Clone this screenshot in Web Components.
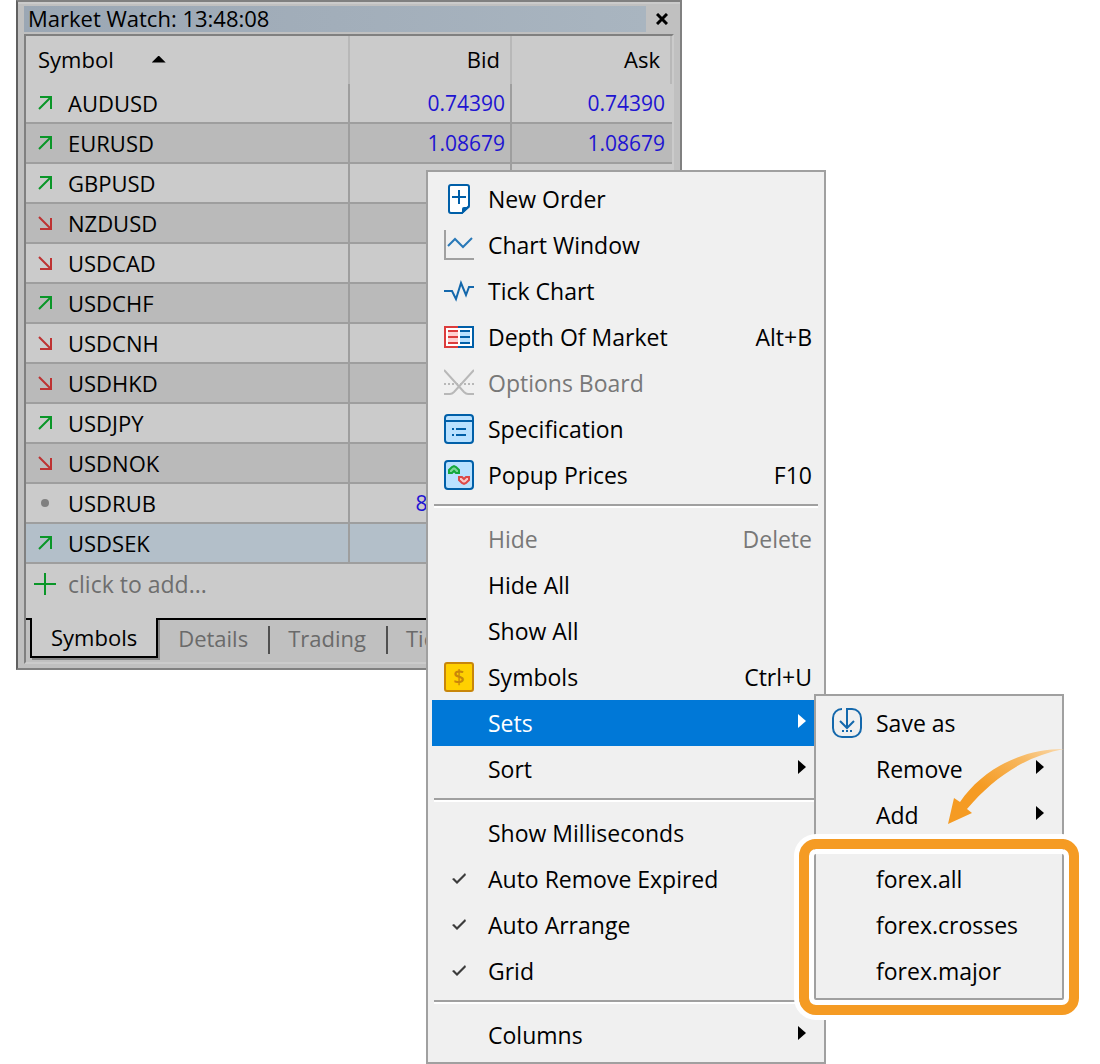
<!DOCTYPE html>
<html lang="en">
<head>
<meta charset="utf-8">
<meta name="viewport" content="width=device-width, initial-scale=1">
<title>Market Watch</title>
<style>
  body{
    margin: 0;
    background: #fff;
    color: #000;
    font-family: "Open Sans", "Noto Sans", sans-serif;
    font-size: 23px;
    line-height: 30px;
  }
</style>
</head>
<body>
<trade-desktop></trade-desktop>

<script>
// 30x30 icons, plus the small glyphs of the symbol list
const ICONS = {
  order: `<path d="M7 1h16a2 2 0 0 1 2 2v19l-7 7H7a2 2 0 0 1-2-2V3a2 2 0 0 1 2-2z" fill="#fff" stroke="#005fa8" stroke-width="2"/>
    <path d="M18 30v-5a2 2 0 0 1 2-2h6z" fill="#005fa8"/><path d="M15 6v14M8 13h14" stroke="#005fa8" stroke-width="2"/>`,
  chart: `<path d="M1 0v29h29" stroke="#a0a0a0" stroke-width="2"/><path d="M4 16l7-7 8 8 9-9" stroke="#2878b8" stroke-width="2"/>`,
  tick: `<path d="M0 15h8l4 8 5-16 5 12 3-8h5" stroke="#1468ac" stroke-width="2"/>`,
  depth: `<path d="M1 5h14v20H1z" fill="#fff" stroke="#dc3c3c" stroke-width="2"/><path d="M15 5h14v20H15z" fill="#fff" stroke="#005fa8" stroke-width="2"/>
    <path d="M4 8h10v14H4z" fill="#ffd2d2"/><path d="M16 8h10v14H16z" fill="#b9e1ff"/><path d="M14 6h2v18h-2z" fill="#fff"/>
    <path d="M4 9h10M4 15h10M4 21h10" stroke="#dc3c3c" stroke-width="2"/><path d="M16 9h10M16 15h10M16 21h10" stroke="#005fa8" stroke-width="2"/>`,
  options: `<path d="M0 2l20 22q2 2 4 2h6M30 2L10 24q-2 2-4 2H0" stroke="#b8b8b8" stroke-width="2"/>
    <path d="M0 16h30" stroke="#b8b8b8" stroke-width="2" stroke-dasharray="2 2"/>`,
  spec: `<rect x="1" y="1" width="28" height="28" rx="3" fill="#b9e1ff" stroke="#005fa8" stroke-width="2"/>
    <path d="M1 7h28M8 15h2M8 21h2M12 15h10M12 21h10" stroke="#005fa8" stroke-width="2"/>`,
  popup: `<rect x="1" y="1" width="28" height="28" rx="3" fill="#b9e1ff" stroke="#005fa8" stroke-width="2"/>
    <path d="M5 13v-3l3-3 2-1 2 1 3 3v3h-3l-2-2-2 2z" fill="#7ed69a" stroke="#14a83c" stroke-width="2"/>
    <path d="M15 17h3l2 2 2-2h3v3l-3 3-2 1-2-1-3-3z" fill="#f8c8c8" stroke="#dc4848" stroke-width="2"/>`,
  symbols: `<rect x="1" y="1" width="28" height="28" rx="2" fill="#ffd000" stroke="#c8860a" stroke-width="2"/>
    <text x="15" y="22" text-anchor="middle" font-size="20" font-weight="600" fill="#c8860a">$</text>`,
  save: `<path d="M10 1a9 9 0 0 0-9 9v10a9 9 0 0 0 9 9h10a9 9 0 0 0 9-9V10a9 9 0 0 0-9-9h-5v18M8 13l7 7 7-7" stroke="#1468ac" stroke-width="2"/>
    <path d="M10 23h2M14 23h2M18 23h2" stroke="#1468ac" stroke-width="2"/>`,
  up: `<path d="M9 21L21 9M10 9h11v12" stroke="#0a9628" stroke-width="2"/>`,
  down: `<path d="M9 9l12 12M21 10v11H10" stroke="#be3232" stroke-width="2"/>`,
  dot: `<circle cx="15" cy="15" r="4" fill="#808080"/>`,
  plus: `<path d="M15 4v22M4 15h22" stroke="#0a9628" stroke-width="2"/>`,
};

class UiIcon extends HTMLElement{
  constructor(){
    super();
    this.attachShadow({mode: 'open'});
  }

  connectedCallback(){
    this.shadowRoot.innerHTML = `
      <style>
        :host{ display: block; flex: none; width: 30px; height: 30px; }
        svg{ display: block; }
      </style>
      <svg width="30" height="30" viewBox="0 0 30 30" fill="none" aria-hidden="true">${ICONS[this.getAttribute('name')] || ''}</svg>`;
  }
}
customElements.define('ui-icon', UiIcon);

// One line of a menu: icon or tick, label, shortcut or submenu arrow
class MenuItem extends HTMLElement{
  constructor(){
    super();
    this.attachShadow({mode: 'open'});
  }

  connectedCallback(){
    const icon = this.getAttribute('icon');
    const shortcut = this.getAttribute('shortcut');
    const check = this.hasAttribute('checked');
    const tag = check ? 'label' : 'button';
    const lead = check ? '<input type="checkbox" checked>' : `<ui-icon name="${icon || ''}"></ui-icon>`;

    this.shadowRoot.innerHTML = `
      <style>
        :host{ display: block; position: relative; }
        .row{
          display: flex;
          align-items: center;
          gap: 14px;
          box-sizing: border-box;
          width: 100%;
          height: 46px;
          margin: 0;
          padding: 0 8px 0 12px;
          border: 0;
          background: none;
          color: inherit;
          font: inherit;
          text-align: left;
          white-space: nowrap;
        }
        .row:disabled{ color: #787878; }
        :host([active]) .row{ background: #0078d7; color: #fff; }
        .text{ flex: 1; }
        .arrow{
          width: 8px;
          height: 14px;
          margin: 0 6px 4px 0;
          background: currentColor;
          clip-path: polygon(0 0, 100% 50%, 0 100%);
        }
        input{
          appearance: none;
          width: 30px;
          height: 30px;
          margin: 0;
        }
        input:checked{
          background: #3c3c3c;
          clip-path: polygon(8px 15px, 10px 14px, 13px 17px, 21px 9px, 22px 11px, 13px 20px);
        }
      </style>
      <${tag} class="row" ${this.hasAttribute('disabled') ? 'disabled' : ''}>
        ${lead}
        <span class="text"><slot></slot></span>
        ${shortcut ? `<span>${shortcut}</span>` : ''}
        ${this.hasAttribute('submenu') ? '<span class="arrow"></span>' : ''}
      </${tag}>
      <slot name="submenu"></slot>`;
  }
}
customElements.define('menu-item', MenuItem);

class MenuSeparator extends HTMLElement{
  constructor(){
    super();
    this.attachShadow({mode: 'open'}).innerHTML = `
      <style>
        :host{ display: block; padding: 6px 2px 8px; }
        div{ height: 2px; background: #a0a0a0; border-bottom: 2px solid #fff; }
      </style>
      <div role="separator"></div>`;
  }
}
customElements.define('menu-separator', MenuSeparator);

class ContextMenu extends HTMLElement{
  constructor(){
    super();
    this.attachShadow({mode: 'open'}).innerHTML = `
      <style>
        :host{
          display: block;
          box-sizing: border-box;
          padding: 4px;
          border: 2px solid #a0a0a0;
          background: #f0f0f0;
          color: #000;
        }
      </style>
      <slot></slot>`;
  }
}
customElements.define('context-menu', ContextMenu);

// Orange outline drawn around whatever is slotted in
class HighlightFrame extends HTMLElement{
  constructor(){
    super();
    this.attachShadow({mode: 'open'}).innerHTML = `
      <style>
        :host{ display: block; position: relative; }
        .frame{
          position: absolute;
          inset: -17px -21px -21px;
          border: 10px solid #f59b23;
          border-radius: 17px;
          box-shadow: 0 0 0 5px #fff, inset 0 0 0 5px #fff;
          pointer-events: none;
        }
      </style>
      <slot></slot>
      <div class="frame"></div>`;
  }
}
customElements.define('highlight-frame', HighlightFrame);

class PointerArrow extends HTMLElement{
  constructor(){
    super();
    this.attachShadow({mode: 'open'}).innerHTML = `
      <style>
        :host{ display: block; pointer-events: none; }
        svg{ display: block; }
      </style>
      <svg width="118" height="78" viewBox="0 0 118 78" aria-hidden="true">
        <defs>
          <linearGradient id="fade" x1="0" y1="1" x2="1" y2="0">
            <stop offset="0.4" stop-color="#f59b23"/>
            <stop offset="0.75" stop-color="#f7b860"/>
            <stop offset="1" stop-color="#fad9ac"/>
          </linearGradient>
        </defs>
        <path d="M2 76L8 50l6 4C36 22 74 1 118 1C80 8 48 29 21 61l5 4z" fill="url(#fade)"/>
      </svg>`;
  }
}
customElements.define('pointer-arrow', PointerArrow);

const QUOTES = [
  {name: 'AUDUSD', dir: 'up', bid: '0.74390', ask: '0.74390'},
  {name: 'EURUSD', dir: 'up', bid: '1.08679', ask: '1.08679'},
  {name: 'GBPUSD', dir: 'up'},
  {name: 'NZDUSD', dir: 'down'},
  {name: 'USDCAD', dir: 'down'},
  {name: 'USDCHF', dir: 'up'},
  {name: 'USDCNH', dir: 'down'},
  {name: 'USDHKD', dir: 'down'},
  {name: 'USDJPY', dir: 'up'},
  {name: 'USDNOK', dir: 'down'},
  {name: 'USDRUB', dir: 'dot', bid: '82.33050'},
  {name: 'USDSEK', dir: 'up', selected: true},
];

class MarketWatch extends HTMLElement{
  constructor(){
    super();
    this.attachShadow({mode: 'open'});
    this.render();
  }

  render(){
    const rows = QUOTES.map(q => `
      <tr class="${q.selected ? 'selected' : ''}">
        <td><div class="symbol"><ui-icon name="${q.dir}"></ui-icon>${q.name}</div></td>
        <td class="price">${q.bid || ''}</td>
        <td class="price">${q.ask || ''}</td>
      </tr>`).join('');

    this.shadowRoot.innerHTML = `
      <style>
        :host{
          display: block;
          box-sizing: border-box;
          padding: 4px 6px;
          border: 2px solid #808080;
          border-left-color: #606060;
          background: #c0c0c0;
          box-shadow: inset 0 2px #cbcbcb;
          font-size: 22px;
        }
        button{
          margin: 0;
          padding: 0;
          border: 0;
          background: none;
          color: inherit;
          font: inherit;
        }
        header{ display: flex; margin-bottom: 2px; }
        h1{
          flex: 1;
          margin: 0;
          padding: 0 0 2px 4px;
          background: linear-gradient(90deg, #9ba7b4, #a9b5c0);
          font-size: 22px;
          font-weight: 400;
          line-height: 24px;
        }
        .close{ display: grid; place-items: center; width: 28px; padding-left: 4px; }
        .body{
          border: 2px solid #cbcbcb;
          border-top-color: #808080;
          border-left-color: #808080;
        }
        .list{ background: #cbcbcb; padding-bottom: 14px; }
        table{ width: 100%; table-layout: fixed; border-collapse: separate; border-spacing: 0; }
        .wide{ width: 162px; }
        .narrow{ width: 160px; }
        th, td{ box-sizing: border-box; padding: 0; border-right: 2px solid #9e9e9e; font-weight: 400; }
        th{ height: 48px; padding: 0 10px 2px 0; border-right-color: #b8b8b8; text-align: right; }
        th:first-child{ padding-left: 12px; text-align: left; }
        .sort{ display: flex; align-items: center; gap: 38px; }
        .sort i{ width: 14px; height: 7px; background: #000; clip-path: polygon(50% 0, 100% 100%, 0 100%); }
        td{ height: 40px; border-bottom: 2px solid #9e9e9e; }
        td:last-child{ border-right: 0; }
        tr:nth-child(even) td{ background: #bababa; }
        tr.selected td{ background: #b3bfc9; }
        .symbol, .add{ display: flex; align-items: center; gap: 8px; padding-left: 4px; }
        td.price{ padding-right: 5px; color: #1e14d2; font-size: 21px; text-align: right; }
        td.price:last-child{ padding-right: 7px; }
        .add{ height: 40px; color: #6e6e6e; font-size: 23px; }
        nav{ display: flex; border-top: 2px solid #000; padding-left: 4px; }
        nav button{ position: relative; height: 36px; padding: 0 20px; color: #6a6a6a; }
        nav button + button + button::before{
          content: "";
          position: absolute;
          left: 0;
          top: 6px;
          width: 2px;
          height: 28px;
          background: #505050;
        }
        nav .current{
          height: 40px;
          margin: -2px 0 4px;
          padding: 0 19px;
          border: solid #000;
          border-width: 0 2px 2px;
          background: #cbcbcb;
          box-shadow: 2px 2px #868686;
          color: #000;
        }
      </style>
      <header>
        <h1>Market Watch: 13:48:08</h1>
        <button class="close" aria-label="Close">
          <svg width="12" height="12" viewBox="0 0 12 12"><path d="M1 1l10 10M11 1L1 11" stroke="#000" stroke-width="3"/></svg>
        </button>
      </header>
      <div class="body">
        <div class="list">
          <table>
            <colgroup><col><col class="wide"><col class="narrow"></colgroup>
            <thead><tr><th><button class="sort">Symbol <i></i></button></th><th>Bid</th><th>Ask</th></tr></thead>
            <tbody>${rows}</tbody>
          </table>
          <button class="add"><ui-icon name="plus"></ui-icon>click to add...</button>
        </div>
        <nav>
          <button class="current">Symbols</button>
          <button>Details</button>
          <button>Trading</button>
          <button>Ticks</button>
        </nav>
      </div>`;
  }
}
customElements.define('market-watch', MarketWatch);

class TradeDesktop extends HTMLElement{
  constructor(){
    super();
    this.attachShadow({mode: 'open'}).innerHTML = `
      <style>
        :host{ display: block; position: relative; min-height: 100vh; }
        market-watch{ margin: 0 38% 0 16px; }
        .main{ position: absolute; left: 426px; top: 170px; min-width: 400px; }
        .sets{ position: absolute; left: 382px; top: -6px; min-width: 250px; z-index: 1; }
        pointer-arrow{ position: absolute; right: -2px; top: 52px; z-index: 1; }
      </style>
      <market-watch></market-watch>
      <context-menu class="main">
        <menu-item icon="order">New Order</menu-item>
        <menu-item icon="chart">Chart Window</menu-item>
        <menu-item icon="tick">Tick Chart</menu-item>
        <menu-item icon="depth" shortcut="Alt+B">Depth Of Market</menu-item>
        <menu-item icon="options" disabled>Options Board</menu-item>
        <menu-item icon="spec">Specification</menu-item>
        <menu-item icon="popup" shortcut="F10">Popup Prices</menu-item>
        <menu-separator></menu-separator>
        <menu-item shortcut="Delete" disabled>Hide</menu-item>
        <menu-item>Hide All</menu-item>
        <menu-item>Show All</menu-item>
        <menu-item icon="symbols" shortcut="Ctrl+U">Symbols</menu-item>
        <menu-item submenu active>Sets
          <context-menu class="sets" slot="submenu">
            <menu-item icon="save">Save as</menu-item>
            <menu-item submenu>Remove</menu-item>
            <menu-item submenu>Add</menu-item>
            <menu-separator></menu-separator>
            <highlight-frame>
              <menu-item>forex.all</menu-item>
              <menu-item>forex.crosses</menu-item>
              <menu-item>forex.major</menu-item>
            </highlight-frame>
            <pointer-arrow></pointer-arrow>
          </context-menu>
        </menu-item>
        <menu-item submenu>Sort</menu-item>
        <menu-separator></menu-separator>
        <menu-item>Show Milliseconds</menu-item>
        <menu-item checked>Auto Remove Expired</menu-item>
        <menu-item checked>Auto Arrange</menu-item>
        <menu-item checked>Grid</menu-item>
        <menu-separator></menu-separator>
        <menu-item submenu>Columns</menu-item>
      </context-menu>`;
  }
}
customElements.define('trade-desktop', TradeDesktop);
</script>
</body>
</html>
